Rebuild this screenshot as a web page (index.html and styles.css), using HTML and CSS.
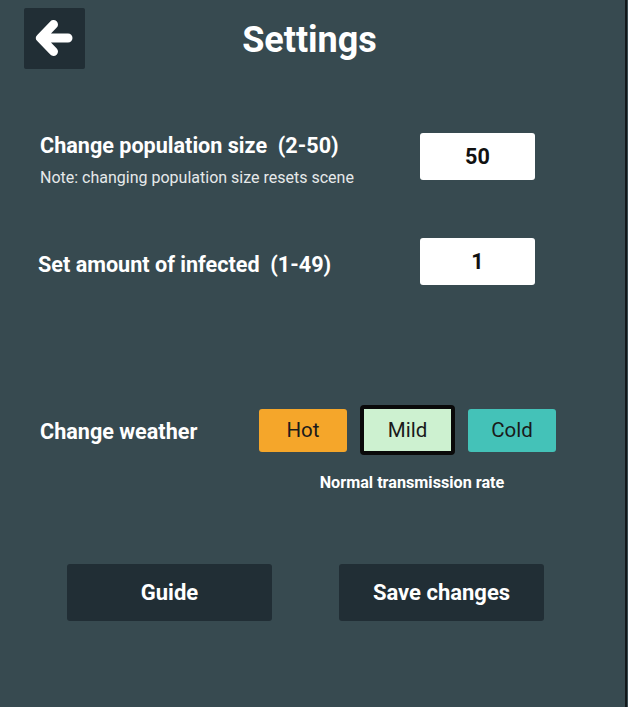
FILE: index.html
```html
<!DOCTYPE html>
<html>
<head>
<meta charset="utf-8">
<link rel="stylesheet" href="styles.css">
</head>
<body>
<div class="screen">
  <header class="top">
    <button class="back" aria-label="Back">
      <svg width="61" height="61" viewBox="0 0 61 61"><path d="M29.5 16.5 L16.5 30 L29.5 43.5 M17 30 L44 30" fill="none" stroke="#fff" stroke-width="9" stroke-linecap="round" stroke-linejoin="round"/></svg>
    </button>
    <h1 class="title">Settings</h1>
    <span></span>
  </header>

  <section class="row row-pop">
    <div class="label-block">
      <div class="label">Change population size&nbsp; (2-50)</div>
      <div class="note">Note: changing population size resets scene</div>
    </div>
    <div class="field">50</div>
  </section>

  <section class="row row-inf">
    <div class="label label-inf">Set amount of infected&nbsp; (1-49)</div>
    <div class="field">1</div>
  </section>

  <section class="weather">
    <div class="label">Change weather</div>
    <div class="weather-opts">
      <div class="opts">
        <button class="opt hot">Hot</button>
        <button class="opt mild">Mild</button>
        <button class="opt cold">Cold</button>
      </div>
      <div class="caption">Normal transmission rate</div>
    </div>
  </section>

  <section class="actions">
    <button class="action">Guide</button>
    <button class="action">Save changes</button>
  </section>
</div>
</body>
</html>
```
FILE: styles.css
```css
html, body {
  margin: 0;
  padding: 0;
  background: #374a50;
}
body {
  font-family: Roboto, "Noto Sans", sans-serif;
  color: #fff;
  width: 628px;
  height: 707px;
  overflow: hidden;
}
.screen {
  width: 627px;
  height: 707px;
  box-sizing: border-box;
  border-right: 2px solid #12181b;
}
.top {
  display: grid;
  grid-template-columns: 61px 1fr 61px;
  align-items: center;
  padding: 8px 30px 0 24px;
}
.back {
  width: 61px;
  height: 61px;
  border: none;
  border-radius: 2px;
  background: #212e35;
  padding: 0;
  display: block;
}
.back svg { display: block; }
.title {
  margin: 0;
  text-align: center;
  font-size: 36px;
  font-weight: 700;
  line-height: 40px;
  margin-top: 2px;
}
.row {
  display: grid;
  grid-template-columns: 380px 115px;
}
.row-pop {
  height: 47px;
  margin-top: 64px;
  padding-left: 40px;
  align-items: start;
}
.row-inf {
  margin-top: 58px;
  padding-left: 38px;
  grid-template-columns: 382px 115px;
  align-items: center;
}
.label {
  font-size: 21.6px;
  font-weight: 700;
  line-height: 26px;
}
.label-inf { padding-top: 7px; }
.note {
  margin-top: 10px;
  font-size: 16px;
  line-height: 18px;
  color: #e6e9ea;
}
.field {
  height: 47px;
  background: #fff;
  border-radius: 3px;
  color: #111;
  font-size: 21.6px;
  font-weight: 700;
  display: flex;
  align-items: center;
  justify-content: center;
}
.weather {
  margin-top: 120px;
  padding-left: 40px;
  display: grid;
  grid-template-columns: 219px auto;
  align-items: start;
}
.weather .label { margin-top: 14px; }
.opts {
  display: flex;
  gap: 13px;
  align-items: center;
  height: 50px;
}
.opt {
  font-family: Roboto, "Noto Sans", sans-serif;
  width: 88px;
  height: 43px;
  border: none;
  border-radius: 3px;
  font-size: 20.5px;
  color: #1a1a1a;
  padding: 0;
}
.hot { background: #f5a62a; }
.mild {
  width: 95px;
  height: 50px;
  background: #cdf1d0;
  border: 4px solid #0a0a0a;
  border-radius: 4px;
}
.cold { background: #44c2b8; }
.caption {
  width: 297px;
  text-align: center;
  padding-left: 9px;
  box-sizing: border-box;
  margin-top: 19px;
  font-size: 16.2px;
  font-weight: 700;
  line-height: 18px;
}
.actions {
  margin-top: 72px;
  padding-left: 67px;
  display: flex;
  gap: 67px;
}
.action {
  font-family: Roboto, "Noto Sans", sans-serif;
  width: 205px;
  height: 57px;
  border: none;
  border-radius: 3px;
  background: #212e35;
  color: #fff;
  font-size: 22px;
  font-weight: 700;
  padding: 0;
}
```
